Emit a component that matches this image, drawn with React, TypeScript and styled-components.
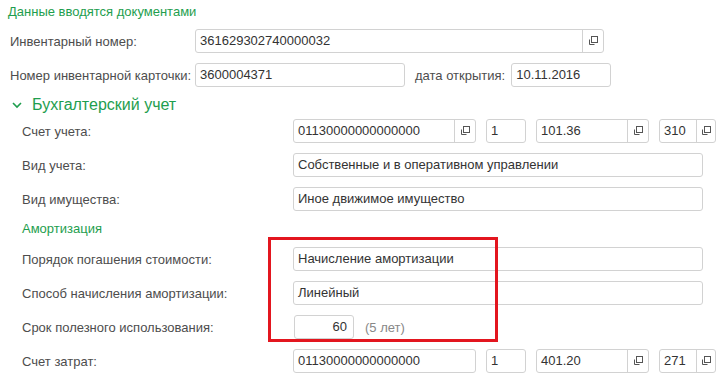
import React from "react";
import styled, { createGlobalStyle } from "styled-components";

const Global = createGlobalStyle`
  html, body { margin: 0; padding: 0; background: #fff; }
  body { font-family: "Liberation Sans", Arial, sans-serif; font-size: 13px; color: #4d4d4d; }
`;

const GREEN = "#1e9e4e";

const Page = styled.div`
  position: relative;
  width: 726px;
  height: 376px;
  overflow: hidden;
  padding-left: 8px;
  box-sizing: border-box;
`;

const Title = styled.div`
  height: 24px;
  line-height: 24px;
  color: ${GREEN};
  font-size: 13px;
`;

const Row = styled.div<{ $mt?: number }>`
  display: flex;
  align-items: center;
  height: 24px;
  margin-top: ${(p) => p.$mt ?? 10}px;
`;

const Label = styled.div<{ $w: number; $pl?: number }>`
  width: ${(p) => p.$w}px;
  padding-left: ${(p) => p.$pl ?? 0}px;
  box-sizing: border-box;
  flex: none;
  white-space: nowrap;
  color: #4d4d4d;
`;

const InlineLabel = styled.div`
  margin: 0 6px 0 10px;
  white-space: nowrap;
  color: #4d4d4d;
`;

const Field = styled.div<{ $w: number; $ml?: number }>`
  width: ${(p) => p.$w}px;
  margin-left: ${(p) => p.$ml ?? 0}px;
  height: 24px;
  box-sizing: border-box;
  border: 1px solid #d2d2d2;
  border-radius: 3px;
  display: flex;
  align-items: stretch;
  flex: none;
  background: #fff;
`;

const FieldText = styled.div<{ $right?: boolean }>`
  flex: 1;
  padding: 0 ${(p) => (p.$right ? 6 : 4)}px 0 4px;
  line-height: 22px;
  color: #333;
  text-align: ${(p) => (p.$right ? "right" : "left")};
  white-space: nowrap;
  overflow: hidden;
`;

const OpenBtn = styled.div<{ $w?: number }>`
  width: ${(p) => p.$w ?? 20}px;
  flex: none;
  border-left: 1px solid #d2d2d2;
  display: flex;
  align-items: center;
  justify-content: center;
`;

const Hint = styled.div`
  margin-left: 11px;
  color: #888;
`;

const SectionHeader = styled.div`
  display: flex;
  align-items: center;
  height: 22px;
  margin-top: 7px;
  color: ${GREEN};
  font-size: 16px;
  padding-left: 4px;
`;

const Chevron = styled.svg`
  width: 10px;
  height: 8px;
  margin-right: 10px;
`;

const Section = styled.div`
  padding-left: 14px;
`;

const SubHeader = styled.div`
  height: 24px;
  line-height: 24px;
  margin-top: 6px;
  color: ${GREEN};
`;

const Annotation = styled.div`
  position: absolute;
  left: 268px;
  top: 237px;
  width: 230px;
  height: 105px;
  box-sizing: border-box;
  border: 3px solid #e3161f;
  pointer-events: none;
`;

const OpenIcon = () => (
  <svg width="10" height="10" viewBox="0 0 10 10">
    <rect x="3.5" y="0.5" width="6" height="6" fill="none" stroke="#555" strokeWidth="1" />
    <path d="M1.5 3.5 V8.5 H6.5" fill="none" stroke="#555" strokeWidth="1" />
  </svg>
);

const Input: React.FC<{ w: number; ml?: number; value: string; btn?: boolean; btnW?: number; right?: boolean }> = ({
  w, ml, value, btn, btnW, right,
}) => (
  <Field $w={w} $ml={ml}>
    <FieldText $right={right}>{value}</FieldText>
    {btn && (
      <OpenBtn $w={btnW}>
        <OpenIcon />
      </OpenBtn>
    )}
  </Field>
);

const AccountRow: React.FC<{ label: string; a: string; b: string; c: string; d: string; aBtn: boolean; mt?: number }> = ({
  label, a, b, c, d, aBtn, mt,
}) => (
  <Row $mt={mt}>
    <Label $w={271}>{label}</Label>
    <Input w={183} value={a} btn={aBtn} />
    <Input w={40} ml={10} value={b} />
    <Input w={113} ml={10} value={c} btn />
    <Input w={57} ml={10} value={d} btn btnW={18} />
  </Row>
);

export default function App() {
  return (
    <Page>
      <Global />
      <Title>Данные вводятся документами</Title>
      <Row $mt={5}>
        <Label $w={187} $pl={2}>Инвентарный номер:</Label>
        <Input w={409} value="361629302740000032" btn />
      </Row>
      <Row>
        <Label $w={187} $pl={2}>Номер инвентарной карточки:</Label>
        <Input w={210} value="3600004371" />
        <InlineLabel>дата открытия:</InlineLabel>
        <Input w={100} value="10.11.2016" />
      </Row>
      <SectionHeader>
        <Chevron viewBox="0 0 10 8">
          <path d="M1 2 L5 6 L9 2" fill="none" stroke={GREEN} strokeWidth="1.6" />
        </Chevron>
        Бухгалтерский учет
      </SectionHeader>
      <Section>
        <AccountRow mt={3} label="Счет учета:" a="01130000000000000" b="1" c="101.36" d="310" aBtn />
        <Row>
          <Label $w={271}>Вид учета:</Label>
          <Input w={410} value="Собственные и в оперативном управлении" />
        </Row>
        <Row>
          <Label $w={271}>Вид имущества:</Label>
          <Input w={410} value="Иное движимое имущество" />
        </Row>
        <SubHeader>Амортизация</SubHeader>
        <Row $mt={6}>
          <Label $w={271}>Порядок погашения стоимости:</Label>
          <Input w={410} value="Начисление амортизации" />
        </Row>
        <Row>
          <Label $w={271}>Способ начисления амортизации:</Label>
          <Input w={410} value="Линейный" />
        </Row>
        <Row>
          <Label $w={272}>Срок полезного использования:</Label>
          <Input w={60} value="60" right />
          <Hint>(5 лет)</Hint>
        </Row>
        <AccountRow label="Счет затрат:" a="01130000000000000" b="1" c="401.20" d="271" aBtn={false} />
      </Section>
      <Annotation />
    </Page>
  );
}
